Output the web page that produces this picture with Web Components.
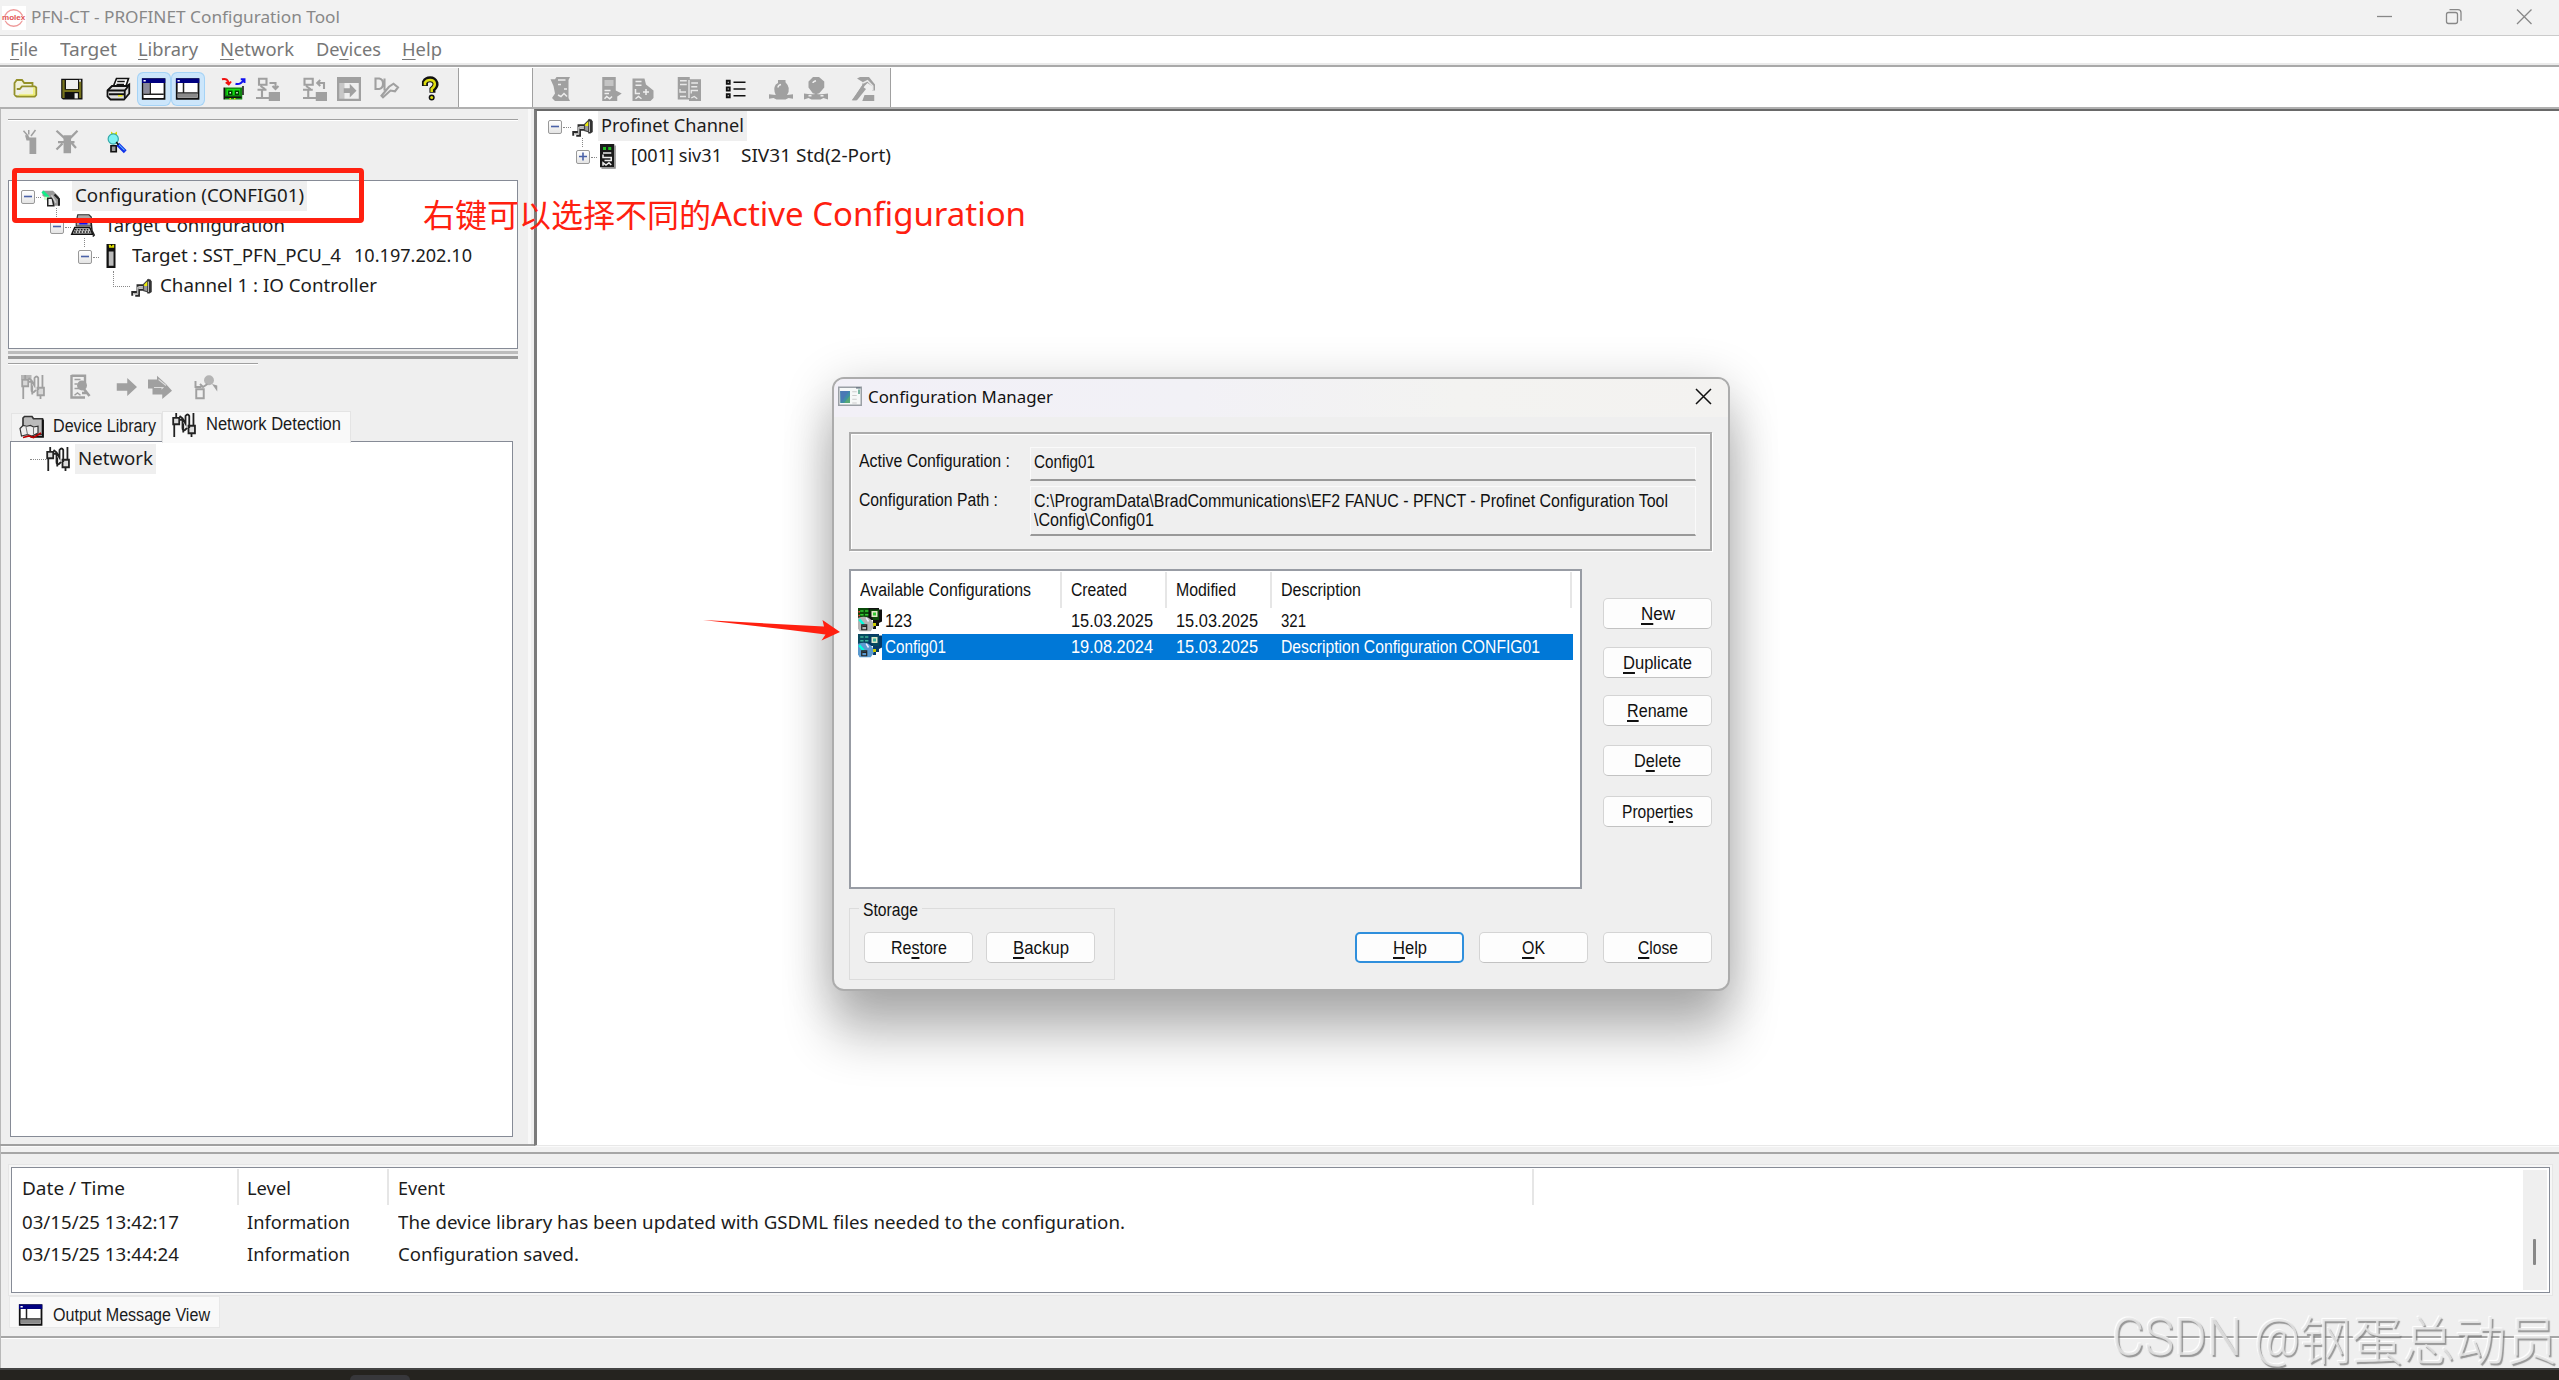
<!DOCTYPE html>
<html lang="en">
<head>
<meta charset="utf-8">
<title>PFN-CT - PROFINET Configuration Tool</title>
<style>
    html, body {
        margin: 0;
        padding: 0;
    }
    body {
        position: relative;
        width: 2559px;
        height: 1380px;
        overflow: hidden;
        background: #efefef;
        font-family: "Noto Sans", "Noto Sans CJK SC", sans-serif;
        font-size: 18px;
        line-height: 1.2;
        color: #1c1c1c;
    }
</style>
</head>
<body>
<app-window></app-window>
<config-dialog></config-dialog>
<red-marks></red-marks>
<water-mark></water-mark>

<script>
const G = '#a0a0a0';

// network plugs, shared by the black and the disabled version
const plugs = (c, f) => `<path d="M1.200 4h3v3h-3zM11 9h4v4h-4z" fill="${f}"/><g stroke="${c}" fill="none" stroke-width="1.200"><path d="M2.800 0v3M.800 3.200h4v4.300h-4zM1.500 7.500V16M4.800 4.500H7v5.500q0 2 1.500 1.500L10 10M5 2l2 1.500 2 3.500V2q1.500-2 2.500 0v8M14.300 0v8M11 8.500h4.300v5H11zM13 13.500V16M7.500 7v6"/></g>`;
const channel = `<path d="M1.500 14.500V12H5V7.500h5M3.500 14.500H6V10.500h4V9" fill="none" stroke="#2a2a2a" stroke-width="1.300"/><path d="M2.500 13.200h2.600V9h4" fill="none" stroke="#b4b4b4" stroke-width="1"/><path d="M9 7 12 4v8l-3-1z" fill="#999" stroke="#444" stroke-width=".8"/><path d="M9.500 7 12 4.500v3.500h-2.500z" fill="#ee0"/><path d="M11.500 3.500h2l1 1.500v7l-1.500 1h-1.500z" fill="#333"/><path d="M12.300 5v7" stroke="#bbb" stroke-width=".7"/>`;
const card = (g, d, c, k) => `<path d="M0 0h14v1h2v8l-2 1v2h-2v2h-2v-6H0z" fill="${k}"/><path d="M0 0h7v6H0zM8 1h6v7h-4z" fill="${d}"/><path d="M1.500 2h2.200M4.700 2h2.200M1.500 4.500h2.200M4.700 4.500h2.200" stroke="${g}"/><path d="M9.500 2.500h3v3h-3z" fill="${g}" stroke="#dfe8c8"/><path d="M0 6.500q4-1.500 7 0 3.500 2 3.500 6l-2 3H1l-1-2z" fill="${c}"/><path d="m.800 7.500 3 3.500" stroke="#0fd" stroke-width="1.600"/><path d="M5.500 6.500 7 9" stroke="#eef" /><path d="M3 12.300h2.500M2.500 11.200h3.300v3.300H2.500z" stroke="#222" fill="none" stroke-width=".8"/><path d="M10 10h2v2h-2z" fill="#cc0"/>`;
const windowIcon = inner => `<path d="M.5 1.500h14.500v13H.5z" fill="#fff" stroke="#111" stroke-width="1.200"/><path d="M0 1h15.500v3H0z" fill="#000080"/><path d="M1 2h1.500v1H1z" fill="#fff"/>${inner}`;

const ICONS = {
    none: '',
    folder: `<path d="M1 12V4l1.500-2H6l1.500 2H13v2.500M1 12l1.500 1h12l1-1V7l-1-.8H6L4.500 8H2.500" fill="#f1f1d8" stroke="#94912a" stroke-width="1.200"/><path d="M14 7v5H4" stroke="#ee4" fill="none" stroke-width=".8"/>`,
    save: `<path d="M.800 1.200H15V15H2L.800 14z" fill="#111"/><path d="M1.600 2h1.500v12H1.600zM12.700 3h1.500v11h-1.500zM3 8.500h10v1.500H3z" fill="#76721c"/><path d="M4 2h8v6H4z" fill="#efefef"/><path d="M12.700 1.800h1.300v1.400h-1.300z" fill="#ddd"/><path d="M9.700 10.800h2.200v3.500H9.700z" fill="#efefef"/>`,
    print: `<path d="m5 6 2-5h8l-2 6" fill="#fff" stroke="#111" stroke-width="1.100"/><path d="M7.500 3h5M7 5h5" stroke="#111"/><path d="m1 9 3-3h10l1.500-1v6L12 15H3l-2-2z" fill="#ddd" stroke="#111" stroke-width="1.200"/><path d="M1 9h11.500L15 6M12.500 9v5M2 11.500h10" stroke="#111" fill="none" stroke-width="1.200"/><path d="M8 12h3v1H8z" fill="#dd0"/>`,
    left: windowIcon('<path d="M1 4h4v7H1z" fill="#8a8a9a"/><path d="M5.500 4v7M1 11.500h13.500" stroke="#222"/><path d="M1.200 12h13v2h-13z" fill="#fff"/>'),
    bottom: windowIcon('<path d="M5 4v7M1 10.700h13.500" stroke="#222"/><path d="M1.200 11.200h13v2.600h-13z" fill="#8a8a8a"/>'),
    card: `<path d="M0 1.500q4-1 4.500 3M2.500 3.500l2 1.500 1.500-2" stroke="#f01010" fill="none" stroke-width="1.300"/><path d="M9 4.500q3 1 5.500-2.500M12.500 1.500H15V4" stroke="#1010f0" fill="none" stroke-width="1.300"/><path d="M2 7h11.500V15H2z" fill="#181"/><path d="M3 8h9v4H3z" fill="#1d1"/><path d="M4.500 9.500h2v2h-2zM9 9.500h2v2H9z" fill="#efe" stroke="#040"/><path d="M1.500 7v8M2 13.500h11M14 6v6" stroke="#111"/><path d="M5 14h1v1H5zM8 14h1v1H8z" fill="#dd0"/>`,
    download: `<g fill="none" stroke="${G}" stroke-width="1.400"><path d="M2 1.200h5v4H2zM3 6l3 2M1 8.500h6M4 8v6M0 14h9M9 4h4v4M11 6l2 2 2-2"/></g><path d="M8.500 10H16v6H8.500z" fill="${G}"/>`,
    upload: `<g fill="none" stroke="${G}" stroke-width="1.400"><path d="M1 1.200h5.500v4H1zM2 6l3 2M0 8.500h6.500M3.500 8v6M0 14h9M14 8V4h-4M11.500 2l-2 2 2 2"/></g><path d="M8.500 10H16v6H8.500z" fill="${G}"/>`,
    goto: `<path fill-rule="evenodd" d="M0 0h16v16H0zM1.500 4h13v10.500h-13z" fill="${G}"/><path d="M1 4h4v11H1z" fill="${G}" opacity=".5"/><path d="M4.500 7.500h4V4.500l4.500 4.700-4.500 4.500v-3h-4z" fill="${G}"/>`,
    diag: `<path d="M1 1v7h2.500Q6 7.500 6 4.500T3.500 1zM7 1v8M5 12.500l5-6 3-2 3 2.500-2 2.500-3-.5-5 4.500z" fill="none" stroke="${G}" stroke-width="1.400"/>`,
    help: `<g transform="translate(-1.200 0)"><path d="M4.500 6V3.500Q5.500 1.500 8 1.500t3.500 2.500Q12 6 9.500 8.200V10.500" fill="none" stroke="#111" stroke-width="4"/><path d="M4.500 5.500V3.800Q5.500 2 8 2t3 2Q11.500 6 9 8v2" fill="none" stroke="#dede10" stroke-width="1.700"/><circle cx="9" cy="13.700" r="2" fill="#111"/><circle cx="9" cy="13.700" r="1" fill="#dede10"/></g>`,
    tower: `<path d="M3 .500l3 3.500M6.500 0v3M11 0 8 4" fill="none" stroke="${G}"/><path d="M4 3.500h2l1 1.500h4.500v11H7V7H5z" fill="${G}"/>`,
    towerx: `<path d="M1 .500l5 4.500h4.500L15 .500M5 9l-4 4M10.500 8l3.500 4M2 8h11" fill="none" stroke="${G}" stroke-width="1.500"/><path d="M5.700 3.500h5v12h-5z" fill="${G}"/>`,
    find: `<path d="m4 1 2 1.500L8 1v3H4z" fill="#dd0"/><circle cx="5.500" cy="6" r="3.400" fill="#7ff2f2" stroke="#3aa" stroke-width=".8"/><path d="M4 10.500h3.500v4H4z" fill="#999" stroke="#111" stroke-width="1.100"/><path d="m8.500 9.500 5 5" stroke="#1030e8" stroke-width="2.600"/><path d="m8 8.500 5 5" stroke="#6cf" stroke-width=".7"/><path d="m7.500 8 1.500 2" stroke="#111"/>`,
    config: `<g transform="translate(-1 1.500)"><path d="M2 3h7l4 4v6H8L2 6z" fill="#999"/><path d="m2 3.500 4 4" stroke="#1e8" stroke-width="2"/><path d="M3 7h4v2H3z" fill="#cfc"/><path d="M5.500 8h3l1 5h-4z" fill="#eee" stroke="#222"/><path d="M10 5.500l3 3V13" stroke="#222" fill="none" stroke-width="1.300"/><path d="m8 6 3 5" stroke="#ccc"/></g>`,
    pc: `<path d="M4.500 .500H12L13.500 2v6H3.500V5z" fill="#aaa" stroke="#333" stroke-width=".8"/><path d="M5.500 3.500h5.500v3.500H5.500z" fill="#1010f0"/><path d="M2.500 9h10l2 4.500H.5z" fill="#ccc" stroke="#111"/><path d="M2.500 10.500h9M2 12h11" stroke="#222" stroke-dasharray="1.200 .8"/><path d="m13.500 6 .5 5 1.500 3-1 1" stroke="#222" fill="none"/>`,
    target: `<path d="M5 0h6v16H5z" fill="#111"/><path d="M6.500 5h3.200v9.500H6.500z" fill="#bbb"/><path d="M6.500.500h1.200l.7 1.200.7-1.200h1v2h-3.400z" fill="#dd0"/>`,
    channel: channel,
    device: `<path d="M2 0h9.500v15.500H2z" fill="#1a1a1a"/><path d="M12 1v15H3" stroke="#888" fill="none"/><path d="M4 2h2v2H4zM7.500 2h2v2h-2z" fill="#2b2"/><path d="M4 6h5.500M4 7v2h5.500v2H5M4 14.500v-2l2 1.500 2-1.500 1.500 1.500" stroke="#eee" fill="none"/>`,
    dev1: `<path d="M1 1.500h3L5 0h9l-1 2v12l1 2H4l-2-2 2-3-1-5z" fill="${G}"/><path d="M6 2h5M6 5h2M10 8h2M6 12l2 1 2-2 2 2" stroke="#ececec" fill="none"/>`,
    dev2: `<path d="M1.500 0h9v9l4 2-3 2v3H1.500z" fill="${G}"/><path d="M3 2h6v4H3z" fill="#efefef" opacity=".45"/><path d="M3 9h4M3 11h3M3 14.500l1.500-1.500 2 1.500L8 13" stroke="#eee" fill="none"/>`,
    dev3: `<path d="M1 1h8l1 4 5 4v5l-2 2H1z" fill="${G}"/><path d="M3 3h4M3 5.500h4M3 8v3h3M3 14.500l2-1.500 2 1.500M8 10h4M10 8v4" stroke="#eee" fill="none"/>`,
    dev4: `<path d="M.500 0h8v1.500H16V16H8v-1H.500z" fill="${G}"/><path d="M2 2.500h4.500M2 5h4.500M2 8v2h4M2 13h4M9.500 4h4.500M9.500 6.500h4M9.500 11V9h4.500M9.500 14l2-1 2 1.500M8 2v12" stroke="#e8e8e8" fill="none" stroke-width=".9"/>`,
    list: `<path d="M2.500 2.500h2v2h-2zM2.500 7h2v2h-2zM2.500 11.500h2v2h-2z" fill="none" stroke="#111" stroke-width="1.200"/><path d="M7 3.500h8M7 8h8M7 12.500h8" stroke="#111" stroke-width="1.100"/>`,
    online: `<path d="M4.500 12q-2-4 0-7l1.500-1V2h5v1.500q4 4 1 8.500l4-.5v3l-3-.5-2 1H5l-2-1-3 .5v-3z" fill="${G}"/><path d="M6 7q0-1.500 2-2" stroke="#eee" fill="none"/>`,
    offline: `<path d="M6 0h4l3.500 3v4L10 11H6L3 7V3zM0 11l4 .5h8l4-.5v4l-3-1-2 1H5l-2-1-3 1zM7 10h2v3H7z" fill="${G}"/><path d="M6 4q0-1 2-1.500M3 12.500h2M11 12.500h2" stroke="#eee" fill="none"/>`,
    tools: `<path d="M4 1 6 0h6l4 5v4h-2V6l-3-2-2 2L3.500 15.500H.500L7 6.500l1-3zM9 12h6.500v4h-8z" fill="${G}"/><path d="M7 6 1 15.500h3L10 8z" fill="${G}"/><path d="m8 4 3-1.500L14.500 6v3" stroke="#e8e8e8" fill="none"/>`,
    plugs: plugs('#222', '#ddd'),
    plugsoff: plugs(G, '#d8d8d8') + `<path d="M0 0h7v3H0z" fill="${G}" opacity=".7"/>`,
    scan: `<path d="M1 .500h9v5M1 0v15h9" stroke="${G}" fill="none" stroke-width="1.600"/><path d="M3 3h4M3 6h2M3 9h3M3 13.500l2-1.500 2 1.500" stroke="${G}" fill="none"/><circle cx="8" cy="7" r="3.300" fill="${G}"/><path d="m9 9 4 5M8 12h3" stroke="${G}" stroke-width="1.800"/>`,
    arrow: `<path d="M.500 5.500h7V2l6.500 6-6.500 6v-3.500h-7z" fill="${G}"/>`,
    arrows: `<path d="M0 3h6V.500L12 6l4 4.500-6.500 5.500v-3H3V9H0z" fill="${G}"/><path d="M4 8.300h6l-1 1.200M7 3l5 4" stroke="#ddd" stroke-width=".7" fill="none"/>`,
    probe: `<path d="M1 4v4h4M4 6l2 2 3-2M1.500 9.500h5v6h-5z" stroke="${G}" fill="none" stroke-width="1.300"/><circle cx="10" cy="3.500" r="3.300" fill="${G}" opacity=".75"/><path d="m12 6 3.500 5V7z" fill="${G}"/>`,
    library: `<path d="M2 13V2l1-1h5l1 1.500h6V13z" fill="#bbb" stroke="#333" stroke-width="1.100"/><path d="M15.300 3v11.500H7" stroke="#111" fill="none" stroke-width="1.300"/><path d="m0 9 2-2 2.500.500L7 7l2 1 3-.500V12l-4 2-3-1-4 1z" fill="#eee" stroke="#333" stroke-width=".8"/><path d="m2 15 4-1 3 1 5-3" stroke="#b00" fill="none" stroke-width="1.200"/><path d="m4 8 1 5M9 8v5" stroke="#777" stroke-width=".7"/>`,
    cfg: card('#3c3', '#0a4a0a', '#b4b4b4', '#111') + '<path d="M.800 2v1M.800 4.500v1" stroke="#f33"/>',
    cfgsel: card('#3bb59b', '#08495f', '#5a9ad0', '#063a66'),
    molex: `<path d="M0 0h16v16H0z" fill="#fff"/><ellipse cx="7.800" cy="8" rx="6" ry="5.500" fill="none" stroke="#ee9a9a" stroke-width=".9"/><path d="M0 6.500h15.500v3.300H0z" fill="#fff"/><text x="0" y="9.600" textLength="15.500" lengthAdjust="spacingAndGlyphs" font-family="Liberation Sans" font-weight="bold" font-size="5" fill="#e05050">molex</text>`,
    dialog: `<path d="M.500 1.500h15v12H.500z" fill="#f6f8f8" stroke="#9a9fa5"/><path d="M1.500 4h6.500v8H1.500z" fill="#3f8ea5"/><path d="M1.500 4h6L2 12z" fill="#4a79b5"/><path d="M4 12l4-5v5z" fill="#56a877"/><path d="M9.500 4.500h3M9.500 7h3M9.500 9.500h3M9.500 12h3" stroke="#ccc" stroke-width=".8"/><path d="M14 3v3" stroke="#286" stroke-width=".8"/><path d="M12 2h3" stroke="#456" stroke-width=".6"/>`
};

class PxIcon extends HTMLElement {
    constructor() {
        super();
        this.attachShadow({mode: 'open'});
    }

    connectedCallback() {
        this.shadowRoot.innerHTML = `
            <style>
                :host {
                    display: block;
                    flex: none;
                    width: 24px;
                    height: 24px;
                }
                svg {
                    display: block;
                    overflow: visible;
                }
            </style>
            <svg width="24" height="24" viewBox="0 0 16 16">${ICONS[this.getAttribute('name')]}</svg>
        `;
    }
}

// A label set to an exact width: the glyphs are squeezed or widened to fill it
class PxText extends HTMLElement {
    constructor() {
        super();
        this.attachShadow({mode: 'open'});
        this.shadowRoot.innerHTML = `
            <style>
                :host {
                    display: flex;
                    flex: none;
                }
                span {
                    flex: none;
                    white-space: pre;
                    transform-origin: 0 50%;
                }
            </style>
            <span><slot></slot></span>
        `;
    }

    connectedCallback() {
        const w = Number(this.getAttribute('w'));
        const span = this.shadowRoot.querySelector('span');
        const natural = span.getBoundingClientRect().width;
        this.style.width = w + 'px';
        span.style.transform = `scaleX(${w / natural})`;
    }
}

class TitleBar extends HTMLElement {
    constructor() {
        super();
        this.attachShadow({mode: 'open'});
        this.shadowRoot.innerHTML = `
            <style>
                :host {
                    display: flex;
                    align-items: center;
                    box-sizing: border-box;
                    height: 36px;
                    padding: 0 26px 0 2px;
                    background: #f2f2f2;
                    border-bottom: 1px solid #cbcbcb;
                    color: #888;
                    font-size: 17px;
                }
                px-text {
                    margin-left: 5px;
                    flex: 1;
                }
                svg {
                    margin-top: -2px;
                }
            </style>
            <px-icon name="molex"></px-icon>
            <px-text w="309">PFN-CT - PROFINET Configuration Tool</px-text>
            <svg width="157" height="18" fill="none" stroke="#888" stroke-width="1.300">
                <path d="M1 8.500h15"/>
                <rect x="70.500" y="4.500" width="11" height="11" rx="2"/>
                <path d="M73.500 1.700h8.500q3 0 3 3v8"/>
                <path d="m141 1.500 14.500 14.500m0-14.500L141 16"/>
            </svg>
        `;
    }
}

class MenuBar extends HTMLElement {
    constructor() {
        super();
        this.attachShadow({mode: 'open'});
        this.shadowRoot.innerHTML = `
            <style>
                :host {
                    display: flex;
                    align-items: center;
                    box-sizing: border-box;
                    height: 31px;
                    padding: 0 0 2px 10px;
                    gap: 21.700px;
                    background: #fff;
                    border-bottom: 2px solid #a9a9a9;
                    box-shadow: inset 0 -2px #ebebeb;
                    color: #777;
                    font-size: 18px;
                }
                u {
                    text-underline-offset: 3px;
                }
            </style>
            <px-text w="28"><u>F</u>ile</px-text>
            <px-text w="57">Target</px-text>
            <px-text w="60"><u>L</u>ibrary</px-text>
            <px-text w="74"><u>N</u>etwork</px-text>
            <px-text w="65">De<u>v</u>ices</px-text>
            <px-text w="40"><u>H</u>elp</px-text>
        `;
    }
}

// icons="gap:name gap:name": gap is the space before the icon, a trailing * marks a pressed one
class ToolBar extends HTMLElement {
    constructor() {
        super();
        this.attachShadow({mode: 'open'});
    }

    connectedCallback() {
        const items = this.getAttribute('icons').split(' ').map(item => {
            const [gap, name] = item.split(':');
            const on = name.endsWith('*');
            return `<px-icon name="${name.replace('*', '')}" class="${on ? 'on' : ''}" style="margin-left:${gap}px"></px-icon>`;
        });
        this.shadowRoot.innerHTML = `
            <style>
                :host {
                    display: flex;
                    align-items: flex-start;
                    box-sizing: border-box;
                }
                .on {
                    background: #cce6fb;
                    border-radius: 2px;
                    box-shadow: 0 0 0 4px #cce6fb, 0 0 0 5px #a5d3f6;
                }
            </style>
            ${items.join('')}
        `;
    }
}

class TreeRow extends HTMLElement {
    constructor() {
        super();
        this.attachShadow({mode: 'open'});
    }

    connectedCallback() {
        const a = name => Number(this.getAttribute(name));
        const box = this.getAttribute('box');
        const cols = `${a('x')}px 14px ${a('icon-x') - a('x') - 14}px 24px ${a('text-x') - a('icon-x') - 27}px auto`;
        this.shadowRoot.innerHTML = `
            <style>
                :host {
                    display: grid;
                    align-items: center;
                    justify-content: start;
                    height: 30px;
                    grid-template-columns: ${cols};
                }
                .box {
                    position: relative;
                    box-sizing: border-box;
                    width: 14px;
                    height: 14px;
                    border: 1.500px solid #999;
                    border-radius: 2px;
                    background: linear-gradient(#fff, #e4e4e4);
                    margin-top: 2px;
                }
                .box svg {
                    display: block;
                }
                .stem::before {
                    content: "";
                    position: absolute;
                    left: 5px;
                    top: -13px;
                    height: 9px;
                    border-left: 1px dotted #888;
                }
                .dots {
                    border-top: 1px dotted #888;
                    margin: 2px 0 0 1px;
                }
                .corner {
                    height: 15px;
                    align-self: start;
                    border-left: 1px dotted #888;
                    border-bottom: 1px dotted #888;
                    grid-column: span 2;
                }
                .line {
                    border-top: 1px dotted #888;
                    grid-column: span 2;
                }
                .label {
                    display: flex;
                    align-items: center;
                    height: 30px;
                    padding: 0 3px;
                }
                :host([marked]) .label {
                    background: #efefef;
                }
            </style>
            <span></span>
            ${box === 'corner' || box === 'line' ? `<span class="${box}"></span>` : `
            <span class="box ${this.hasAttribute('stem') ? 'stem' : ''}">
                <svg width="11" height="11" stroke="#4a62a8" stroke-width="1.600"><path d="M2 5.500h8${box === 'plus' ? 'M6 1.500v8' : ''}"/></svg>
            </span>
            <span class="dots"></span>`}
            <px-icon name="${this.getAttribute('icon')}"></px-icon>
            <span></span>
            <div class="label"><slot></slot></div>
        `;
    }
}

class SidePane extends HTMLElement {
    constructor() {
        super();
        this.attachShadow({mode: 'open'});
        this.shadowRoot.innerHTML = `
            <style>
                :host {
                    display: flex;
                    flex-direction: column;
                    box-sizing: border-box;
                    width: 534px;
                    padding: 10px 16px 7px 8px;
                    background: linear-gradient(90deg, #b9b9b9 1px, #efefef 1px 528px, #f8f8f8 528px 531px, #efefef 531px);
                    border-bottom: 2px solid #a0a0a0;
                }
                .groove {
                    flex: none;
                    height: 1px;
                    background: #a0a0a0;
                    border-bottom: 1px solid #fff;
                }
                .short {
                    width: 250px;
                    margin-top: 4px;
                }
                .bar {
                    flex: none;
                    height: 3px;
                    margin-top: 2px;
                    background: #bcbcbc;
                }
                .bar.dark {
                    background: #9a9a9a;
                }
                .tree {
                    box-sizing: border-box;
                    border: 1.500px solid #868b96;
                    padding: 0 1px;
                    background: #fff;
                }
                .top {
                    flex: none;
                    height: 169px;
                }
                .tabs {
                    display: flex;
                    flex: none;
                    align-items: flex-end;
                    height: 31px;
                    margin-left: 3px;
                    font: 18px "Liberation Sans", sans-serif;
                }
                .tab {
                    display: flex;
                    align-items: center;
                    box-sizing: border-box;
                    gap: 9px;
                    width: 151px;
                    height: 28px;
                    padding: 0 0 2px 8px;
                    background: #f3f3f3;
                    border: 1px solid #e4e4e4;
                    border-bottom: 0;
                }
                .tab.on {
                    width: 189px;
                    height: 32px;
                    margin-bottom: -2px;
                    padding: 0 0 6px 9px;
                    background: #f9f9f9;
                    z-index: 1;
                }
                .tab.on px-text {
                    margin-left: 1px;
                }
                .bottom {
                    flex: 1;
                    margin: 0 5px 0 2px;
                    padding-top: 2px;
                }
            </style>
            <div class="groove"></div>
            <tool-bar style="height:59px;padding-top:9px" icons="11:tower 12:towerx 26:find"></tool-bar>
            <div class="tree top">
                <tree-row marked x="11" icon-x="31" text-x="65" icon="config"><px-text w="229">Configuration (CONFIG01)</px-text></tree-row>
                <tree-row stem x="40" icon-x="61" text-x="95" icon="pc"><px-text w="180">Target Configuration</px-text></tree-row>
                <tree-row stem x="68" icon-x="89" text-x="122" icon="target"><px-text w="209">Target : SST_PFN_PCU_4</px-text><px-text w="118" style="margin-left:13px">10.197.202.10</px-text></tree-row>
                <tree-row box="corner" x="103" icon-x="120" text-x="150" icon="channel"><px-text w="217">Channel 1 : IO Controller</px-text></tree-row>
            </div>
            <div class="bar"></div>
            <div class="bar dark"></div>
            <div class="groove short"></div>
            <tool-bar style="height:45px;padding-top:10px" icons="13:plugsoff 25:scan 22:arrow 8:arrows 22:probe"></tool-bar>
            <div class="tabs">
                <div class="tab"><px-icon name="library"></px-icon><px-text w="103">Device Library</px-text></div>
                <div class="tab on"><px-icon name="plugs"></px-icon><px-text w="135">Network Detection</px-text></div>
            </div>
            <div class="tree bottom">
                <tree-row marked box="line" x="18" icon-x="34" text-x="66" icon="plugs"><px-text w="75">Network</px-text></tree-row>
            </div>
        `;
    }
}

class AppWindow extends HTMLElement {
    constructor() {
        super();
        this.attachShadow({mode: 'open'});
        this.shadowRoot.innerHTML = `
            <style>
                :host {
                    display: flex;
                    flex-direction: column;
                    height: 1380px;
                }
                .tools {
                    display: flex;
                    flex: none;
                    box-sizing: border-box;
                    height: 42px;
                    background: #fff;
                    border-bottom: 2px solid #b0b0b0;
                }
                .tools tool-bar {
                    background: #efefef;
                    border-right: 1.500px solid #a0a0a0;
                    padding-top: 9px;
                    margin-top: 1px;
                }
                .main {
                    display: flex;
                    flex: none;
                    height: 1037px;
                }
                .view {
                    flex: 1;
                    border-left: 3px solid #7b7b7b;
                    border-top: 2px solid #696969;
                    border-bottom: 1px solid #e8e8e8;
                    background: #fff;
                }
            </style>
            <title-bar></title-bar>
            <menu-bar></menu-bar>
            <div class="tools">
                <tool-bar style="width:459px" icons="13:folder 23:save 22:print 12:left* 10:bottom* 22:card 10:download 23:upload 10:goto 13:diag 22:help"></tool-bar>
                <tool-bar style="width:74px;background:#fff" icons="0:none"></tool-bar>
                <tool-bar style="width:358px" icons="16:dev1 27:dev2 7:dev3 22:dev4 22:list 22:online 11:offline 23:tools"></tool-bar>
            </div>
            <div class="main">
                <side-pane></side-pane>
                <div class="view">
                    <tree-row marked x="11" icon-x="34" text-x="64" icon="channel"><px-text w="143">Profinet Channel</px-text></tree-row>
                    <tree-row stem box="plus" x="39" icon-x="60" text-x="94" icon="device"><px-text w="91">[001] siv31</px-text><px-text w="150" style="margin-left:19px">SIV31 Std(2-Port)</px-text></tree-row>
                </div>
            </div>
            <output-pane></output-pane>
            <task-strip></task-strip>
        `;
    }
}

class OutputPane extends HTMLElement {
    constructor() {
        super();
        this.attachShadow({mode: 'open'});
        this.shadowRoot.innerHTML = `
            <style>
                :host {
                    display: flex;
                    flex: none;
                    flex-direction: column;
                    box-sizing: border-box;
                    height: 222px;
                    background: #efefef;
                    border-left: 1px solid #b9b9b9;
                }
                .split {
                    flex: none;
                    height: 5px;
                    background: #f1f1f1;
                    border-top: 1px solid #fafafa;
                    border-bottom: 2px solid #a6a6a6;
                }
                .log {
                    display: flex;
                    flex: none;
                    box-sizing: border-box;
                    width: 2539px;
                    height: 126px;
                    margin: 13px 0 0 10px;
                    border: 1.500px solid #868b96;
                    box-shadow: 0 0 0 2px #f6f6f6, 0 0 0 3px #e6e6e6;
                    background: #fff;
                    padding: 1px;
                }
                .table {
                    flex: 1;
                }
                .row {
                    display: grid;
                    grid-template-columns: 225px 151px 1144px;
                    align-items: center;
                    height: 32px;
                }
                .row > * {
                    margin: 3px 0 0 9px;
                }
                .head {
                    height: 36px;
                    background: linear-gradient(#e6e6e6, #e6e6e6) 224px 0 / 2px 100% no-repeat,
                        linear-gradient(#e6e6e6, #e6e6e6) 374px 0 / 2px 100% no-repeat,
                        linear-gradient(#e6e6e6, #e6e6e6) 1519px 0 / 2px 100% no-repeat;
                }
                .scroll {
                    width: 24px;
                    margin: 1px;
                    background: #efefef;
                }
                .thumb {
                    width: 3px;
                    height: 26px;
                    margin: 69px 0 0 10px;
                    border-radius: 1px;
                    background: #888;
                }
                .tab {
                    display: flex;
                    align-items: center;
                    flex: none;
                    box-sizing: border-box;
                    width: 211px;
                    height: 32px;
                    margin: 3px 0 8px 8px;
                    padding: 5px 0 0 9px;
                    gap: 10px;
                    background: #f9f9f9;
                    border: 1px solid #e8e8e8;
                    font: 18px "Liberation Sans", sans-serif;
                }
                .tab px-text {
                    margin-top: 2px;
                }
                .status {
                    flex: 1;
                    border-top: 2px solid #a6a6a6;
                    box-shadow: inset 0 1px #fff;
                }
            </style>
            <div class="split"></div>
            <div class="log">
                <div class="table">
                    <div class="row head">
                        <px-text w="103">Date / Time</px-text>
                        <px-text w="44">Level</px-text>
                        <px-text w="47">Event</px-text>
                    </div>
                    <div class="row">
                        <px-text w="157">03/15/25 13:42:17</px-text>
                        <px-text w="103">Information</px-text>
                        <px-text w="727">The device library has been updated with GSDML files needed to the configuration.</px-text>
                    </div>
                    <div class="row">
                        <px-text w="157">03/15/25 13:44:24</px-text>
                        <px-text w="103">Information</px-text>
                        <px-text w="181">Configuration saved.</px-text>
                    </div>
                </div>
                <div class="scroll"><div class="thumb"></div></div>
            </div>
            <div class="tab"><px-icon name="bottom"></px-icon><px-text w="157">Output Message View</px-text></div>
            <div class="status"></div>
        `;
    }
}

class TaskStrip extends HTMLElement {
    constructor() {
        super();
        this.attachShadow({mode: 'open'});
        this.shadowRoot.innerHTML = `
            <style>
                :host {
                    display: flex;
                    flex: 1;
                    box-sizing: border-box;
                    overflow: hidden;
                    background: #25231f;
                    border-top: 2px solid #444;
                }
                div {
                    width: 60px;
                    margin: 5px 0 0 350px;
                    border-radius: 5px 5px 0 0;
                    background: #37373b;
                }
            </style>
            <div></div>
        `;
    }
}

class PushButton extends HTMLElement {
    constructor() {
        super();
        this.attachShadow({mode: 'open'});
        this.shadowRoot.innerHTML = `
            <style>
                :host {
                    display: flex;
                    flex: none;
                    align-items: center;
                    justify-content: center;
                    box-sizing: border-box;
                    width: 109px;
                    height: 31px;
                    padding-top: 2px;
                    background: #fdfdfd;
                    border: 1.500px solid #d4d4d4;
                    border-bottom-color: #c2c2c2;
                    border-radius: 5px;
                }
                :host([focused]) {
                    border: 2px solid #2f8fdc;
                }
            </style>
            <slot></slot>
        `;
    }
}

class ConfigDialog extends HTMLElement {
    constructor() {
        super();
        this.attachShadow({mode: 'open'});
        this.shadowRoot.innerHTML = `
            <style>
                :host {
                    position: absolute;
                    left: 832px;
                    top: 377px;
                    box-sizing: border-box;
                    width: 898px;
                    height: 614px;
                    border: 2px solid #acacac;
                    border-radius: 12px;
                    background: #efefef;
                    background-clip: padding-box;
                    box-shadow: 0 46px 50px rgba(0, 0, 0, .24), 0 8px 50px rgba(0, 0, 0, .2);
                    font: 18px/19px "Liberation Sans", sans-serif;
                    color: #111;
                }
                u {
                    text-underline-offset: 3px;
                    text-decoration-thickness: 1.500px;
                }
                header {
                    display: flex;
                    align-items: center;
                    height: 38px;
                    padding: 0 16px 0 4px;
                    border-radius: 10px 10px 0 0;
                    background: linear-gradient(90deg, #f2f0f7, #f2f1f6 40%, #f3f3f1 70%, #f3f2f0);
                    font: 17px "Noto Sans", sans-serif;
                }
                header px-icon {
                    margin-top: -3px;
                }
                header px-text {
                    flex: 1;
                    margin: -3px 0 0 6px;
                }
                .info {
                    display: grid;
                    grid-template-columns: 171px 666px;
                    grid-template-rows: 34px 50px;
                    row-gap: 5px;
                    box-sizing: border-box;
                    width: 863px;
                    height: 119px;
                    margin: 15px 0 0 15px;
                    padding: 13px 0 0 8px;
                    border: 2px solid #ababab;
                    box-shadow: 1px 1px #fff, inset 1px 1px #fff;
                }
                .info > px-text {
                    padding-top: 5px;
                }
                .field {
                    box-sizing: border-box;
                    padding-left: 3px;
                    border: 1px solid #fafafa;
                    border-bottom: 2px solid #999;
                    padding-top: 5px;
                }
                .middle {
                    display: flex;
                    margin: 18px 0 0 15px;
                }
                .list {
                    box-sizing: border-box;
                    width: 733px;
                    height: 320px;
                    border: 2px solid #989ca4;
                    background: #fff;
                }
                .row {
                    display: grid;
                    grid-template-columns: 31px 180px 105px 105px 301px;
                    height: 26px;
                }
                .row div {
                    display: flex;
                    align-items: center;
                    padding: 1px 0 0 9px;
                }
                .row div:nth-child(2) {
                    padding-left: 3px;
                }
                .row px-icon {
                    margin-left: 7px;
                }
                .head {
                    grid-template-columns: 211px 105px 105px 300px;
                    height: 37px;
                }
                .head div, .head div:nth-child(2) {
                    padding: 0 0 0 9px;
                    border-right: 2px solid #e6e6e6;
                    margin-top: 1px;
                }
                .on div {
                    background: #0078d7;
                    color: #fff;
                }
                .actions {
                    margin: 29px 0 0 21px;
                }
                footer {
                    display: flex;
                    margin: 19px 0 0 15px;
                }
                .storage {
                    display: flex;
                    box-sizing: border-box;
                    width: 266px;
                    height: 72px;
                    gap: 13px;
                    padding: 23px 0 0 14px;
                    border: 1.500px solid #dcdcdc;
                    position: relative;
                }
                .storage > px-text {
                    position: absolute;
                    left: 9px;
                    top: -8px;
                    padding: 0 4px;
                    background: #efefef;
                }
                footer > push-button {
                    margin: 24px 0 0 15px;
                }
            </style>
            <header>
                <px-icon name="dialog"></px-icon>
                <px-text w="185">Configuration Manager</px-text>
                <svg width="17" height="17" stroke="#111" stroke-width="1.500" style="margin-top:-3px"><path d="m1 1 15 15M16 1 1 16"/></svg>
            </header>
            <div class="info">
                <px-text w="151">Active Configuration :</px-text>
                <div class="field"><px-text w="61">Config01</px-text></div>
                <px-text w="139">Configuration Path :</px-text>
                <div class="field">
                    <px-text w="634">C:\\ProgramData\\BradCommunications\\EF2 FANUC - PFNCT - Profinet Configuration Tool</px-text>
                    <px-text w="120">\\Config\\Config01</px-text>
                </div>
            </div>
            <div class="middle">
                <div class="list">
                    <div class="row head">
                        <div><px-text w="171">Available Configurations</px-text></div>
                        <div><px-text w="56">Created</px-text></div>
                        <div><px-text w="60">Modified</px-text></div>
                        <div><px-text w="80">Description</px-text></div>
                    </div>
                    <div class="row">
                        <px-icon name="cfg"></px-icon>
                        <div><px-text w="27">123</px-text></div>
                        <div><px-text w="82">15.03.2025</px-text></div>
                        <div><px-text w="82">15.03.2025</px-text></div>
                        <div><px-text w="25">321</px-text></div>
                    </div>
                    <div class="row on">
                        <px-icon name="cfgsel"></px-icon>
                        <div><px-text w="61">Config01</px-text></div>
                        <div><px-text w="82">19.08.2024</px-text></div>
                        <div><px-text w="82">15.03.2025</px-text></div>
                        <div><px-text w="259">Description Configuration CONFIG01</px-text></div>
                    </div>
                </div>
                <div class="actions">
                    <push-button><px-text w="34"><u>N</u>ew</px-text></push-button>
                    <push-button style="margin-top:18px"><px-text w="69"><u>D</u>uplicate</px-text></push-button>
                    <push-button style="margin-top:17px"><px-text w="61"><u>R</u>ename</px-text></push-button>
                    <push-button style="margin-top:19px"><px-text w="47">D<u>e</u>lete</px-text></push-button>
                    <push-button style="margin-top:20px"><px-text w="71">Proper<u>t</u>ies</px-text></push-button>
                </div>
            </div>
            <footer>
                <div class="storage">
                    <px-text w="55">Storage</px-text>
                    <push-button><px-text w="56">Re<u>s</u>tore</px-text></push-button>
                    <push-button><px-text w="56"><u>B</u>ackup</px-text></push-button>
                </div>
                <push-button focused style="margin-left:240px"><px-text w="34"><u>H</u>elp</px-text></push-button>
                <push-button><px-text w="23"><u>O</u>K</px-text></push-button>
                <push-button><px-text w="40"><u>C</u>lose</px-text></push-button>
            </footer>
        `;
    }
}

// Red frame, note and arrow drawn over the window
class RedMarks extends HTMLElement {
    constructor() {
        super();
        this.attachShadow({mode: 'open'});
        this.shadowRoot.innerHTML = `
            <style>
                :host {
                    color: #ff2010;
                }
                .frame {
                    position: absolute;
                    left: 12px;
                    top: 168px;
                    box-sizing: border-box;
                    width: 352px;
                    height: 55px;
                    border: 5px solid #ff2010;
                    border-radius: 4px;
                }
                .note {
                    position: absolute;
                    left: 423px;
                    top: 190px;
                    display: flex;
                    font-size: 32px;
                    line-height: 48px;
                }
                .note px-text:first-child {
                    font-family: "Noto Sans CJK SC", sans-serif;
                    margin-top: -1px;
                }
                svg {
                    position: absolute;
                    left: 700px;
                    top: 617px;
                }
            </style>
            <div class="frame"></div>
            <div class="note">
                <px-text w="288">右键可以选择不同的</px-text>
                <px-text w="315">Active Configuration</px-text>
            </div>
            <svg width="142" height="26" fill="#ff2010"><path d="M3 3 124 9.500 122.500 3 140 15 121.500 23.500 125.500 17.500 90 13z"/></svg>
        `;
    }
}

class WaterMark extends HTMLElement {
    constructor() {
        super();
        this.attachShadow({mode: 'open'});
        this.shadowRoot.innerHTML = `
            <style>
                :host {
                    position: absolute;
                    left: 2112px;
                    top: 1300px;
                    display: flex;
                    font: 300 52px/76px "Noto Sans CJK SC", sans-serif;
                    color: rgba(228, 228, 228, .85);
                    text-shadow: 1.500px 1.500px 1px rgba(120, 120, 120, .75), -1px -1px 1px #fff;
                }
            </style>
            <px-text w="188" style="font-family:Roboto">CSDN @</px-text>
            <px-text w="258">钢蛋总动员</px-text>
        `;
    }
}

customElements.define('app-window', AppWindow);
customElements.define('title-bar', TitleBar);
customElements.define('menu-bar', MenuBar);
customElements.define('side-pane', SidePane);
customElements.define('output-pane', OutputPane);
customElements.define('task-strip', TaskStrip);
customElements.define('config-dialog', ConfigDialog);
customElements.define('red-marks', RedMarks);
customElements.define('water-mark', WaterMark);
customElements.define('tool-bar', ToolBar);
customElements.define('tree-row', TreeRow);
customElements.define('push-button', PushButton);
customElements.define('px-icon', PxIcon);
// last, so that every label is measured with its final font
customElements.define('px-text', PxText);
</script>
</body>
</html>
